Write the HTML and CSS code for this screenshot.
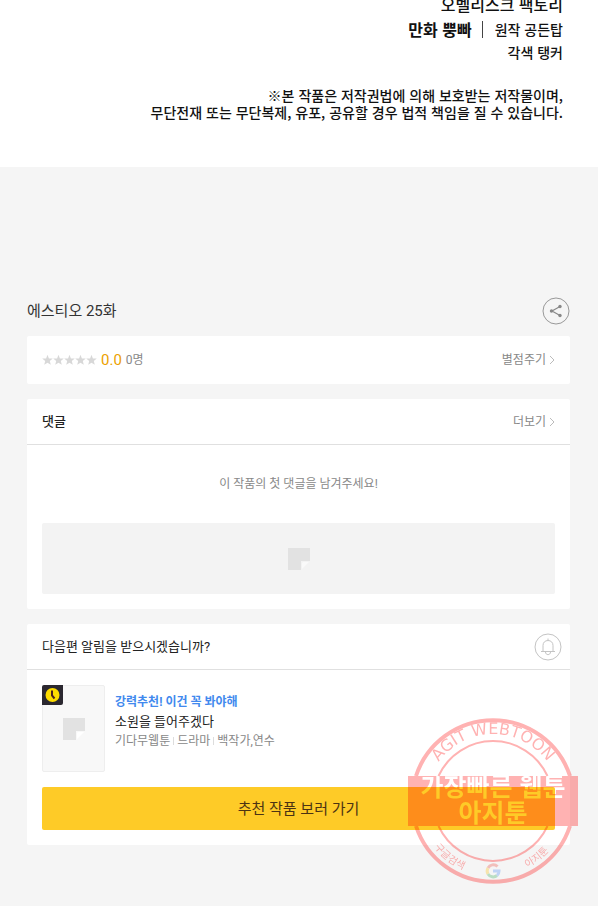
FILE: index.html
```html
<!DOCTYPE html>
<html lang="ko">
<head>
  <meta charset="UTF-8">
  <meta name="viewport" content="width=device-width, initial-scale=1.0">
  <title>에스티오 25화</title>
  <link rel="stylesheet" href="styles.css">
</head>
<body>
  <header class="credits">
    <p class="credit-studio">오벨리스크 팩토리</p>
    <p class="credit-main"><b>만화 뿡빠</b><span class="bar"></span><span class="credit-sub">원작 공든탑</span></p>
    <p class="credit-sub">각색 탱커</p>
    <p class="notice">※본 작품은 저작권법에 의해 보호받는 저작물이며,<br>무단전재 또는 무단복제, 유포, 공유할 경우 법적 책임을 질 수 있습니다.</p>
  </header>

  <main class="viewer-end">
    <div class="episode">
      <h1>에스티오 25화</h1>
      <button class="round-btn" aria-label="공유">
        <svg width="28" height="28" viewBox="0 0 28 28">
          <circle cx="14" cy="14" r="13" fill="none" stroke="#999"/>
          <path d="M18 9.500 L10 14 L18 18.500" fill="none" stroke="#888" stroke-width="1.2"/>
          <circle cx="18" cy="9.500" r="1.700" fill="#888"/>
          <circle cx="9.500" cy="14" r="1.700" fill="#888"/>
          <circle cx="18" cy="18.500" r="1.700" fill="#888"/>
        </svg>
      </button>
    </div>

    <section class="card rating">
      <div class="score">
        <svg class="stars" width="55" height="12" viewBox="0 0 55 12">
          <defs><path id="star" d="M5.5 .8 L6.9 4.4 L10.8 4.6 L7.8 7 L8.8 10.8 L5.5 8.7 L2.2 10.8 L3.2 7 L.2 4.6 L4.1 4.4 Z"/></defs>
          <g fill="#d8d8d8">
            <use href="#star"/><use href="#star" x="11"/><use href="#star" x="22"/><use href="#star" x="33"/><use href="#star" x="44"/>
          </g>
        </svg>
        <strong>0.0</strong>
        <span class="count">0명</span>
      </div>
      <a class="more" href="#">별점주기<svg width="6" height="10" viewBox="0 0 6 10"><path d="M1 1 L5 5 L1 9" fill="none" stroke="#bbb"/></svg></a>
    </section>

    <section class="card">
      <div class="card-head">
        <h2>댓글</h2>
        <a class="more" href="#">더보기<svg width="6" height="10" viewBox="0 0 6 10"><path d="M1 1 L5 5 L1 9" fill="none" stroke="#bbb"/></svg></a>
      </div>
      <div class="card-body">
        <p class="empty">이 작품의 첫 댓글을 남겨주세요!</p>
        <div class="banner">
          <svg width="22" height="22" viewBox="0 0 22 22"><path d="M0 0H22V13H13V22H0Z" fill="#e2e2e2"/><path d="M15 14H21L14 21V15Z" fill="#fafafa"/></svg>
        </div>
      </div>
    </section>

    <section class="card">
      <div class="card-head">
        <h2 class="plain">다음편 알림을 받으시겠습니까?</h2>
        <button class="round-btn alarm" aria-label="알림">
          <svg width="28" height="28" viewBox="0 0 28 28">
            <g fill="none" stroke="#c4c4c4">
              <circle cx="14" cy="14" r="13"/>
              <path d="M7 18.500H21M9 18.500V12.500C9 9.500 11 7.500 14 7.500C17 7.500 19 9.500 19 12.500V18.500M14 7.500V5.500M11.500 19C11.500 22.500 16.500 22.500 16.500 19"/>
            </g>
          </svg>
        </button>
      </div>
      <div class="card-body">
        <div class="work">
          <div class="thumb">
            <svg class="wait" width="21" height="20" viewBox="0 0 21 20">
              <path d="M2 0H21V18Q21 20 19 20H0V2Q0 0 2 0Z" fill="#2b2830"/>
              <circle cx="10.500" cy="10" r="7" fill="#fddc00"/>
              <path d="M10 5.500V10.500L12.500 13.500" fill="none" stroke="#4a2020" stroke-width="2"/>
            </svg>
            <svg width="22" height="22" viewBox="0 0 22 22"><path d="M0 0H22V13H13V22H0Z" fill="#e2e2e2"/><path d="M15 14H21L14 21V15Z" fill="#fff"/></svg>
          </div>
          <div class="info">
            <p class="copy">강력추천! 이건 꼭 봐야해</p>
            <p class="title">소원을 들어주겠다</p>
            <p class="meta"><span>기다무웹툰</span><span>드라마</span><span>백작가,연수</span></p>
          </div>
        </div>
        <button class="go">추천 작품 보러 가기</button>
      </div>
    </section>
  </main>

  <svg class="stamp" width="170" height="170" viewBox="0 0 170 170">
    <defs>
      <path id="arcTop" d="M18 85 A67 67 0 0 1 152 85"/>
      <path id="arcBottom" d="M10 85 A75 75 0 0 0 160 85"/>
      <mask id="cut">
        <rect width="170" height="170" fill="#fff"/>
        <g class="stamp-band" fill="#000" text-anchor="middle">
          <text x="85" y="80">가장빠른 웹툰</text>
          <text x="85" y="106">아지툰</text>
        </g>
      </mask>
    </defs>
    <g opacity=".3">
      <g fill="none" stroke="#f00">
        <path d="M8 60 A81 81 0 0 1 162 60 M8 110 A81 81 0 0 0 162 110" stroke-width="4"/>
        <path d="M30.500 60 A60 60 0 0 1 139.500 60 M30.500 110 A60 60 0 0 0 139.500 110" stroke-width="2"/>
      </g>
      <rect y="60" width="170" height="50" fill="#f00" mask="url(#cut)"/>
      <text class="stamp-en" fill="#f00" text-anchor="middle"><textPath href="#arcTop" startOffset="50%">AGIT WEBTOON</textPath></text>
      <g class="stamp-ko" fill="#f00" text-anchor="middle">
        <text><textPath href="#arcBottom" startOffset="29%">구글검색</textPath></text>
        <text><textPath href="#arcBottom" startOffset="71%">아지툰</textPath></text>
      </g>
      <g fill="none" stroke-width="3">
        <path d="M89.500 150.500A6 6 0 0 0 80 152" stroke="#ea4335"/>
        <path d="M80 152A6 6 0 0 0 80 158" stroke="#fbbc05"/>
        <path d="M80 158A6 6 0 0 0 89 159.500" stroke="#34a853"/>
        <path d="M89 159.500Q91 158 91 155H85" stroke="#4285f4"/>
      </g>
    </g>
  </svg>
</body>
</html>
```
FILE: styles.css
```css
* {
  box-sizing: border-box;
}

body {
  margin: 0;
  background-color: #f5f5f5;
  color: #333;
  font-family: Roboto, "Noto Sans CJK KR", sans-serif;
  font-size: 12px;
  line-height: 18px;
}

h1, h2, p {
  margin: 0;
  font-weight: normal;
}

button {
  font-family: inherit;
  padding: 0;
  border: 0;
  background: none;
  cursor: pointer;
}

a {
  text-decoration: none;
}

svg {
  display: block;
}

.credits {
  height: 167px;
  padding-right: 35px;
  overflow: hidden;
  background-color: #fff;
  color: #111;
  text-align: right;
  font-family: "Noto Sans CJK KR", sans-serif;
}

.credits p {
  font-weight: 500;
}

.credit-studio {
  margin-top: -9px;
  font-size: 16px;
  line-height: 26px;
}

.credit-main {
  display: flex;
  justify-content: flex-end;
  align-items: center;
  font-size: 16px;
  line-height: 24px;
}

.bar {
  width: 1px;
  height: 17px;
  margin: 0 12px 0 10px;
  background-color: #444;
}

.credit-sub {
  font-size: 14px;
  line-height: 22px;
}

.notice {
  margin-top: 24px;
  font-size: 14px;
  line-height: 17px;
}

.viewer-end {
  padding: 130px 28px 60px 27px;
}

.episode {
  display: flex;
  justify-content: space-between;
  align-items: center;
  height: 28px;
  margin-bottom: 11px;
}

.episode h1 {
  font-size: 15px;
}

.card {
  margin-bottom: 15px;
  background-color: #fff;
  border-radius: 2px;
}

.rating {
  display: flex;
  justify-content: space-between;
  align-items: center;
  height: 48px;
  padding: 0 15px;
}

.score {
  display: flex;
  align-items: center;
  gap: 4px;
}

.score strong {
  color: #eca100;
  font-size: 15px;
  font-weight: normal;
}

.count,
.more {
  color: #888;
}

.more {
  display: flex;
  align-items: center;
  gap: 3px;
}

.card-head {
  display: flex;
  justify-content: space-between;
  align-items: center;
  height: 46px;
  padding: 0 15px;
  border-bottom: 1px solid #e0e0e0;
}

.card-head h2 {
  color: #222;
  font-size: 13px;
  font-weight: 500;
}

.card-head .plain {
  font-weight: normal;
}

.alarm {
  margin-right: -7px;
}

.card-body {
  padding: 15px;
}

.empty {
  padding: 15px 0 30px;
  color: #888;
  text-align: center;
}

.banner {
  display: flex;
  align-items: center;
  justify-content: center;
  height: 71px;
  background-color: #f3f3f3;
  border-radius: 2px;
}

.work {
  display: flex;
  gap: 10px;
  margin-bottom: 15px;
}

.thumb {
  position: relative;
  display: flex;
  align-items: center;
  justify-content: center;
  width: 63px;
  height: 87px;
  background-color: #f8f8f8;
  border: 1px solid #eee;
  border-radius: 2px;
}

.wait {
  position: absolute;
  top: -1px;
  left: -1px;
}

.info {
  padding-top: 8px;
}

.copy {
  color: #4189ee;
  font-weight: bold;
}

.title {
  color: #222;
  font-size: 13px;
  line-height: 22px;
}

.meta {
  display: flex;
  color: #888;
  line-height: 16px;
}

.meta span + span::before {
  content: "";
  display: inline-block;
  width: 1px;
  height: 8px;
  margin: 0 3px;
  background-color: #ddd;
}

.go {
  display: block;
  width: 100%;
  height: 43px;
  padding-bottom: 3px;
  background-color: #fecb27;
  border-radius: 2px;
  color: #4c3313;
  font-size: 15px;
}

/* watermark over the bottom right corner */
.stamp {
  position: fixed;
  right: 20px;
  bottom: 20px;
}

.stamp text {
  font-family: "Noto Sans CJK KR", sans-serif;
}

.stamp .stamp-band text {
  font-size: 25px;
  font-weight: bold;
}

.stamp .stamp-en {
  font-family: "DejaVu Sans", sans-serif;
  font-size: 16px;
}

.stamp .stamp-ko text {
  font-size: 10px;
}
```
